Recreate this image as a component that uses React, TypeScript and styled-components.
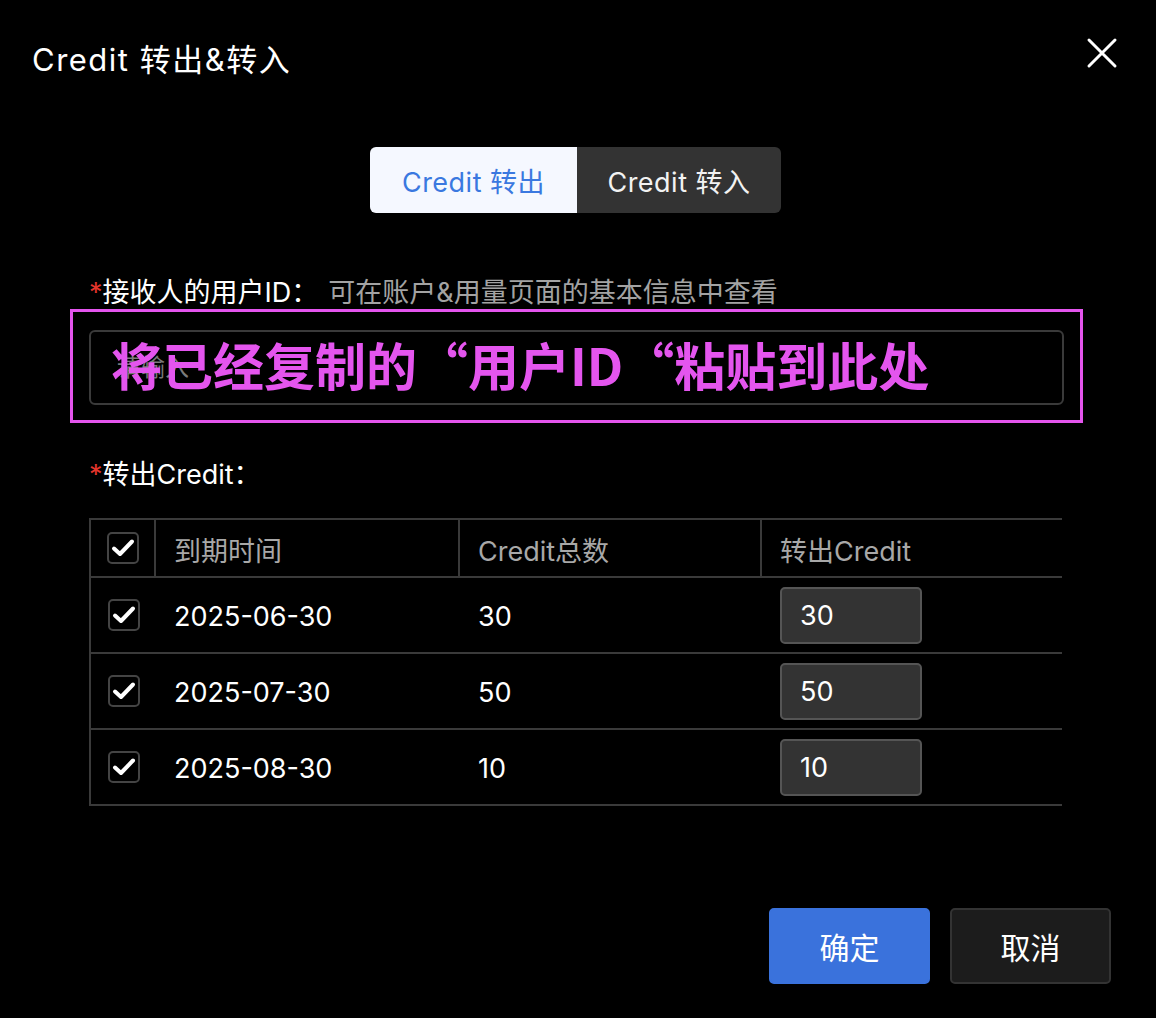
import React, { useState } from "react";
import styled, { createGlobalStyle } from "styled-components";

const GlobalStyle = createGlobalStyle`
  html, body {
    margin: 0;
    padding: 0;
    background: #000;
  }
  body {
    font-family: Inter, "Noto Sans CJK SC", sans-serif;
    color: #fff;
  }
`;

type Row = {
  date: string;
  total: number;
};

const rows: Row[] = [
  { date: "2025-06-30", total: 30 },
  { date: "2025-07-30", total: 50 },
  { date: "2025-08-30", total: 10 },
];

const Dialog = styled.div`
  width: 1156px;
  height: 1018px;
  background: #000;
  display: flex;
  flex-direction: column;
  box-sizing: border-box;
`;

const Header = styled.div`
  display: flex;
  justify-content: space-between;
  align-items: flex-start;
  padding: 40px 38px 0 32px;
  height: 80px;
  box-sizing: border-box;
`;

const Title = styled.h2`
  margin: 0;
  font-size: 31px;
  font-weight: 400;
  line-height: 40px;
  letter-spacing: 1.5px;
  color: #fff;
`;

const CloseButton = styled.button`
  margin-top: -3px;
  padding: 0;
  width: 32px;
  height: 32px;
  border: none;
  background: transparent;
  cursor: pointer;
  display: flex;
  align-items: center;
  justify-content: center;
`;

const TabsRow = styled.div`
  display: flex;
  justify-content: center;
  margin-top: 67px;
  padding-right: 5px;
`;

const Tabs = styled.div`
  display: flex;
  border-radius: 6px;
  overflow: hidden;
`;

const Tab = styled.button<{ $active?: boolean; $w: number }>`
  width: ${(p) => p.$w}px;
  height: 66px;
  border: none;
  margin: 0;
  font-family: inherit;
  font-size: 27px;
  letter-spacing: 0.5px;
  cursor: pointer;
  background: ${(p) => (p.$active ? "#f5f8ff" : "#333333")};
  color: ${(p) => (p.$active ? "#3a78e0" : "#f2f2f2")};
`;

const Form = styled.div`
  padding: 0 94px 0 89px;
`;

const Label = styled.div<{ $top: number }>`
  margin-top: ${(p) => p.$top}px;
  font-size: 27px;
  line-height: 32px;
  color: #fff;
  white-space: nowrap;
`;

const Star = styled.span`
  color: #e3342b;
`;

const Hint = styled.span`
  margin-left: 10px;
  color: #a3a3a3;
`;

const Highlight = styled.div`
  position: relative;
  margin: 0 -21px 0 -19px;
  border: 3px solid #e455ee;
  padding: 18px 16px 15px 16px;
`;

const Input = styled.input`
  display: block;
  width: 100%;
  height: 75px;
  box-sizing: border-box;
  border: 2px solid #3a3a3a;
  border-radius: 6px;
  background: transparent;
  padding: 0 26px;
  font-family: inherit;
  font-size: 24px;
  color: #fff;
  outline: none;
  &::placeholder {
    color: #7a7a7a;
  }
`;

const Annotation = styled.div`
  position: absolute;
  left: 38px;
  top: 22px;
  font-family: "Noto Sans CJK SC", sans-serif;
  font-size: 51px;
  font-weight: 700;
  line-height: 60px;
  color: #e455ee;
  white-space: nowrap;
  pointer-events: none;
`;

const Table = styled.div`
  margin-top: 27px;
  border-left: 2px solid #3a3a3a;
`;

const TRow = styled.div<{ $head?: boolean }>`
  display: grid;
  grid-template-columns: 65px 304px 302px 1fr;
  height: ${(p) => (p.$head ? 60 : 76)}px;
  border-top: ${(p) => (p.$head ? "2px solid #3a3a3a" : "none")};
  border-bottom: 2px solid #3a3a3a;
  box-sizing: border-box;
  font-size: 27px;
  color: ${(p) => (p.$head ? "#a8a8a8" : "#fff")};
`;

const Cell = styled.div<{ $divider?: boolean; $center?: boolean }>`
  display: flex;
  align-items: center;
  justify-content: ${(p) => (p.$center ? "center" : "flex-start")};
  padding-left: ${(p) => (p.$center ? 0 : 18)}px;
  padding-top: 3px;
  border-right: ${(p) => (p.$divider ? "2px solid #3a3a3a" : "none")};
  white-space: nowrap;
`;

const CheckBox = styled.span`
  width: 32px;
  height: 32px;
  margin-top: -3px;
  box-sizing: border-box;
  border: 2px solid #444;
  border-radius: 5px;
  display: flex;
  align-items: center;
  justify-content: center;
`;

const AmountInput = styled.input`
  width: 142px;
  height: 57px;
  margin-top: -3px;
  box-sizing: border-box;
  background: #333;
  border: 2px solid #555;
  border-radius: 5px;
  padding: 0 18px;
  font-family: inherit;
  font-size: 27px;
  color: #fff;
  outline: none;
`;

const Footer = styled.div`
  margin-top: auto;
  padding: 0 45px 34px 0;
  display: flex;
  justify-content: flex-end;
  gap: 20px;
`;

const Button = styled.button<{ $primary?: boolean }>`
  width: 161px;
  height: 76px;
  box-sizing: border-box;
  border-radius: 5px;
  font-family: inherit;
  font-size: 30px;
  color: #fff;
  cursor: pointer;
  background: ${(p) => (p.$primary ? "#3a72dc" : "#1c1c1c")};
  border: 2px solid ${(p) => (p.$primary ? "#3a72dc" : "#333")};
`;

const Check = () => (
  <svg width="24" height="20" viewBox="0 0 24 20">
    <path
      d="M3 10.5 L9 16 L21 3.5"
      fill="none"
      stroke="#fff"
      strokeWidth="4"
      strokeLinecap="round"
      strokeLinejoin="round"
    />
  </svg>
);

const App: React.FC = () => {
  const [tab, setTab] = useState<"out" | "in">("out");
  const [amounts, setAmounts] = useState<string[]>(rows.map((r) => String(r.total)));

  return (
    <Dialog>
      <GlobalStyle />
      <Header>
        <Title>Credit 转出&amp;转入</Title>
        <CloseButton aria-label="close">
          <svg width="32" height="32" viewBox="0 0 32 32">
            <path d="M3 3 L29 29 M29 3 L3 29" stroke="#fff" strokeWidth="3" strokeLinecap="round" />
          </svg>
        </CloseButton>
      </Header>

      <TabsRow>
        <Tabs>
          <Tab $w={207} $active={tab === "out"} onClick={() => setTab("out")}>
            Credit 转出
          </Tab>
          <Tab $w={204} $active={tab === "in"} onClick={() => setTab("in")}>
            Credit 转入
          </Tab>
        </Tabs>
      </TabsRow>

      <Form>
        <Label $top={64}>
          <Star>*</Star>接收人的用户ID：<Hint>可在账户&amp;用量页面的基本信息中查看</Hint>
        </Label>
        <Highlight>
          <Input placeholder="请输入" />
          <Annotation>将已经复制的“用户ID“粘贴到此处</Annotation>
        </Highlight>

        <Label $top={36}>
          <Star>*</Star>转出Credit：
        </Label>

        <Table>
          <TRow $head>
            <Cell $center $divider>
              <CheckBox>
                <Check />
              </CheckBox>
            </Cell>
            <Cell $divider>到期时间</Cell>
            <Cell $divider>Credit总数</Cell>
            <Cell>转出Credit</Cell>
          </TRow>
          {rows.map((r, i) => (
            <TRow key={r.date}>
              <Cell $center>
                <CheckBox>
                  <Check />
                </CheckBox>
              </Cell>
              <Cell>{r.date}</Cell>
              <Cell>{r.total}</Cell>
              <Cell>
                <AmountInput
                  value={amounts[i]}
                  onChange={(e) => {
                    const next = [...amounts];
                    next[i] = e.target.value;
                    setAmounts(next);
                  }}
                />
              </Cell>
            </TRow>
          ))}
        </Table>
      </Form>

      <Footer>
        <Button $primary>确定</Button>
        <Button>取消</Button>
      </Footer>
    </Dialog>
  );
};

export default App;
